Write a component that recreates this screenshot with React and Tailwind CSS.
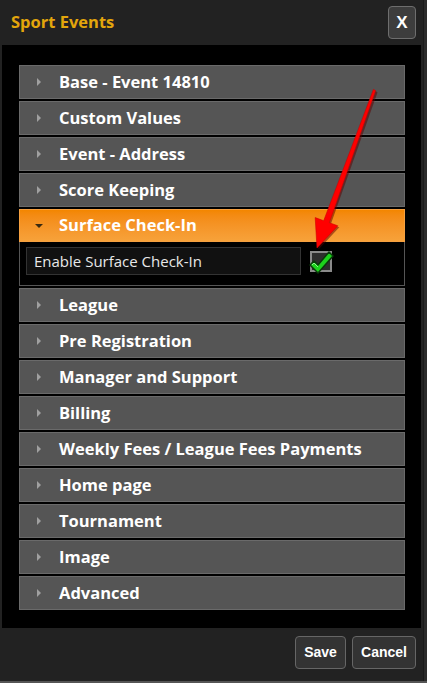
import React from "react";

const sectionsTop = ["Base - Event 14810", "Custom Values", "Event - Address", "Score Keeping"];
const sectionsBottom = [
  "League",
  "Pre Registration",
  "Manager and Support",
  "Billing",
  "Weekly Fees / League Fees Payments",
  "Home page",
  "Tournament",
  "Image",
  "Advanced",
];

const Caret = ({ open }) => (
  <svg width="8" height="8" viewBox="0 0 8 8" className="shrink-0">
    {open ? (
      <polygon points="0,2 8,2 4,6" fill="#3a2a10" />
    ) : (
      <polygon points="2,0 6,4 2,8" fill="#a0a0a0" />
    )}
  </svg>
);

const SectionRow = ({ title }) => (
  <div className="flex items-center h-[34px] mb-[2px] bg-[#555555] border border-[#6a6a6a] pl-[15px] cursor-pointer">
    <Caret />
    <span className="ml-[16px] text-white font-bold text-[16.5px] leading-none">{title}</span>
  </div>
);

const App = () => {
  return (
    <div className="w-[427px] h-[683px] bg-[#2b2b2b] flex flex-col" style={{ fontFamily: '"Open Sans", "Noto Sans", sans-serif' }}>
      <div className="w-[424px] h-[681px] bg-[#222222] flex flex-col border-r border-[#1a1a1a]">
        {/* Header */}
        <div className="h-[45px] flex items-center justify-between pl-[11px] pr-[7px] shrink-0">
          <span className="text-[#e3a60c] font-bold text-[16.5px]">Sport Events</span>
          <button className="w-[28px] h-[33px] bg-[#3d3d3d] border border-[#6e6e6e] rounded-[4px] text-white font-bold text-[17px] flex items-center justify-center" style={{ fontFamily: '"Liberation Sans", Arial, sans-serif' }}>
            X
          </button>
        </div>

        {/* Body */}
        <div className="relative mx-[2px] bg-black pt-[20px] pb-[16px] pl-[17px] pr-[16px] shrink-0">
          {sectionsTop.map((s) => (
            <SectionRow key={s} title={s} />
          ))}

          {/* Open section */}
          <div className="mb-[2px]">
            <div className="flex items-center h-[33px] bg-gradient-to-b from-[#f38600] to-[#f7a23a] border border-[#f5a040] pl-[15px]">
              <Caret open />
              <span className="ml-[16px] text-white font-bold text-[16.5px] leading-none">Surface Check-In</span>
            </div>
            <div className="border border-t-0 border-[#555555] px-[6px] pt-[5px] pb-[10px] flex items-center">
              <div className="w-[275px] h-[28px] bg-[#111111] border border-[#333333] flex items-center pl-[7px] text-[15px] text-[#e8e8e8]">
                Enable Surface Check-In
              </div>
              <div className="relative ml-[9px] w-[22px] h-[21px] bg-[#2e2e2e] border-2 border-[#8a8a8a]">
                <svg width="27" height="27" viewBox="0 0 27 27" className="absolute left-[-4px] top-[-5px]">
                  <path d="M2 17 L6 13 L10 17 L21 4 L25 8 L10 25 Z" fill="#1dd21d" stroke="#0a3a0a" strokeWidth="1.5" strokeLinejoin="round" />
                  <path d="M4 17 L6 15 L10 19" fill="none" stroke="#8cf58c" strokeWidth="1" />
                </svg>
              </div>
            </div>
          </div>

          {sectionsBottom.map((s) => (
            <SectionRow key={s} title={s} />
          ))}

          {/* Red annotation arrow */}
          <svg className="absolute left-0 top-0 pointer-events-none" width="420" height="583" viewBox="0 0 420 583">
            <g transform="translate(-2,-45)">
              <polygon points="376,91 374,89.2 323.7,220.7 315.2,217.6 317,248 337.8,225.8 329.3,222.7" fill="#600000" opacity="0.5" transform="translate(1.5,1.5)" />
              <polygon points="375.6,90.6 373.4,89.4 323.7,220.7 315.2,217.6 317,248 337.8,225.8 329.3,222.7" fill="#ff0000" stroke="#d00000" strokeWidth="0.6" strokeLinejoin="round" />
            </g>
          </svg>
        </div>

        {/* Footer */}
        <div className="flex-1 flex items-start justify-end pt-[8px] pr-[7px] gap-[6px]">
          <button className="h-[33px] w-[51px] bg-[#333333] border border-[#666666] rounded-[4px] text-white font-bold text-[14px]" style={{ fontFamily: '"Liberation Sans", Arial, sans-serif' }}>
            Save
          </button>
          <button className="h-[33px] w-[64px] bg-[#333333] border border-[#666666] rounded-[4px] text-white font-bold text-[14px]" style={{ fontFamily: '"Liberation Sans", Arial, sans-serif' }}>
            Cancel
          </button>
        </div>
      </div>
      <div className="h-[2px] bg-[#555555] w-full" />
    </div>
  );
};

export default App;
